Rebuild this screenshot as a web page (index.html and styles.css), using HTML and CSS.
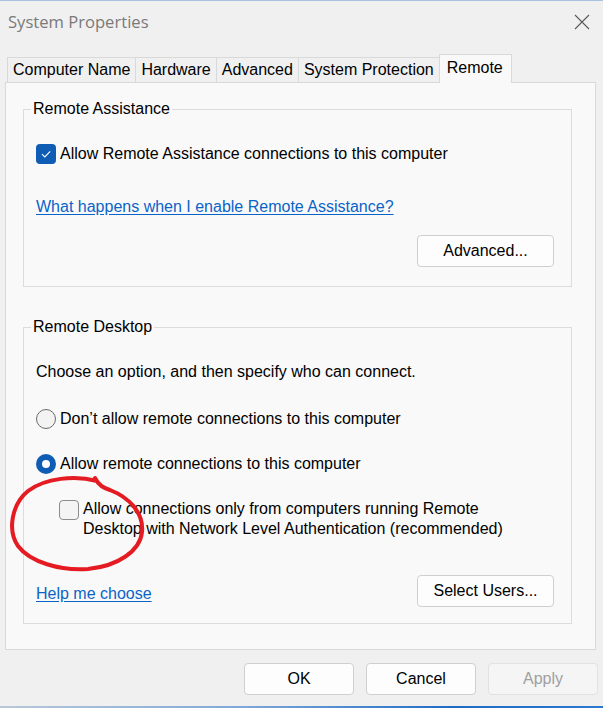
FILE: index.html
```html
<!DOCTYPE html>
<html lang="en">
<head>
<meta charset="utf-8">
<title>System Properties</title>
<link rel="stylesheet" href="styles.css">
</head>
<body>
<div class="window">
  <div class="titlebar">
    <span class="title">System Properties</span>
    <svg class="close" width="16" height="16" viewBox="0 0 16 16"><path d="M1 1 L15 15 M15 1 L1 15" stroke="#5a5a5a" stroke-width="1.1" fill="none"/></svg>
  </div>
  <div class="tabs">
    <div class="tab">Computer Name</div>
    <div class="tab">Hardware</div>
    <div class="tab">Advanced</div>
    <div class="tab">System Protection</div>
    <div class="tab active">Remote</div>
  </div>
  <div class="page">
    <fieldset class="group group-assist">
      <legend>Remote Assistance</legend>
      <div class="row check-row">
        <span class="cb checked"><svg width="20" height="20" viewBox="0 0 20 20"><path d="M6 10.2 L8.8 13 L14.2 7.4" stroke="#fff" stroke-width="1.1" fill="none"/></svg></span>
        <span>Allow Remote Assistance connections to this computer</span>
      </div>
      <a class="link link-assist" href="#">What happens when I enable Remote Assistance?</a>
      <div class="btn-row"><button class="btn btn-wide">Advanced...</button></div>
    </fieldset>
    <fieldset class="group group-desktop">
      <legend>Remote Desktop</legend>
      <p class="intro">Choose an option, and then specify who can connect.</p>
      <div class="row radio-row first"><span class="radio"></span><span>Don’t allow remote connections to this computer</span></div>
      <div class="row radio-row"><span class="radio on"></span><span>Allow remote connections to this computer</span></div>
      <div class="row nla-row"><span class="cb"></span><span>Allow connections only from computers running Remote<br>Desktop with Network Level Authentication (recommended)</span></div>
      <div class="bottom-row"><a class="link link-help" href="#">Help me choose</a><button class="btn btn-wide">Select Users...</button></div>
    </fieldset>
  </div>
  <div class="footer">
    <button class="btn btn-foot">OK</button>
    <button class="btn btn-foot">Cancel</button>
    <button class="btn btn-foot disabled">Apply</button>
  </div>
  <div class="edge"></div>
  <svg class="annotation" width="603" height="708" viewBox="0 0 603 708">
    <path d="M97 481 C 75 475, 45 478, 28 491 C 12 504, 7 530, 18 546 C 30 562, 60 571, 88 569 C 118 566, 140 551, 142 532 C 144 512, 128 497, 110 490 C 104 488, 99 486, 95 478" stroke="#e41b22" stroke-width="4" fill="none" stroke-linecap="round" stroke-linejoin="round"/>
  </svg>
</div>
</body>
</html>
```

FILE: styles.css
```css
* { box-sizing: border-box; }
html, body { margin: 0; padding: 0; }
body {
  width: 603px;
  height: 708px;
  overflow: hidden;
  font-family: "Liberation Sans", Arial, sans-serif;
  font-size: 16px;
  color: #000;
}
.window {
  position: relative;
  width: 603px;
  height: 708px;
  background: #f0f0f0;
  border-top: 1px solid #a8c4e0;
  display: flex;
  flex-direction: column;
}
.titlebar {
  height: 53px;
  display: flex;
  justify-content: space-between;
  align-items: flex-start;
  padding: 9px 13px 0 8px;
}
.title {
  font-family: "Open Sans", "Noto Sans", sans-serif;
  font-size: 16.6px;
  line-height: 24px;
  color: #7a7a7a;
}
.close { margin-top: 4px; }
.tabs {
  height: 28px;
  display: flex;
  align-items: flex-end;
  padding-left: 7px;
}
.tab {
  height: 25px;
  line-height: 24px;
  padding: 0 5px;
  border-top: 1px solid #d9d9d9;
  border-left: 1px solid #d9d9d9;
  background: #f0f0f0;
  white-space: nowrap;
}
.tab.active {
  height: 29px;
  margin-bottom: -1px;
  line-height: 26px;
  padding: 0 8px 0 7px;
  border-right: 1px solid #d9d9d9;
  background: #f9f9f9;
  position: relative;
  z-index: 1;
}
.page {
  margin: 0 7px 0 5px;
  border: 1px solid #d9d9d9;
  background: #f9f9f9;
  padding: 17px 23px 25px 17px;
}
.group {
  margin: 0;
  padding: 0 17px 19px 12px;
  border: 1px solid #dcdcdc;
  min-width: 0;
}
.group legend {
  font-size: 16px;
  line-height: 18px;
  padding: 0 2px;
  margin-left: -5px;
}
.group-desktop {
  margin-top: 31px;
  padding-bottom: 16px;
}
.row {
  display: flex;
  align-items: center;
  gap: 4px;
  line-height: 20px;
}
.check-row { margin-top: 26px; }
.cb {
  width: 20px;
  height: 20px;
  flex: none;
  border: 1px solid #8c8c8c;
  border-radius: 4px;
  background: #f4f4f4;
}
.cb.checked {
  border: none;
  background: #0f5cb4;
}
.cb svg { display: block; }
.link {
  display: block;
  width: fit-content;
  color: #0a64c8;
  text-decoration: underline;
  text-underline-offset: 2px;
  line-height: 20px;
}
.link-assist { margin-top: 33px; }
.btn-row {
  margin-top: 18px;
  display: flex;
  justify-content: flex-end;
}
.btn {
  height: 32px;
  font-family: "Liberation Sans", Arial, sans-serif;
  font-size: 16px;
  color: #000;
  background: #fdfdfd;
  border: 1px solid #cfcfcf;
  border-radius: 4px;
  padding: 0;
}
.btn-wide { width: 137px; }
.intro {
  margin: 26px 0 0;
  line-height: 20px;
}
.radio-row { margin-top: 25px; }
.radio-row.first { margin-top: 27px; }
.radio {
  width: 20px;
  height: 20px;
  flex: none;
  border-radius: 50%;
  border: 1px solid #6a6a6a;
  background: #f3f3f3;
}
.radio.on {
  border: none;
  background: #0f5cb4;
  position: relative;
}
.radio.on::after {
  content: "";
  position: absolute;
  left: 6px;
  top: 6px;
  width: 8px;
  height: 8px;
  border-radius: 50%;
  background: #fff;
}
.nla-row {
  margin-top: 25px;
  margin-left: 23px;
  align-items: flex-start;
}
.nla-row .cb { margin-top: 1px; }
.bottom-row {
  margin-top: 36px;
  display: flex;
  justify-content: space-between;
  align-items: center;
}
.link-help { margin-top: 6px; }
.footer {
  margin-top: 13px;
  display: flex;
  justify-content: flex-end;
  gap: 12px;
  padding-right: 5px;
}
.btn-foot { width: 110px; }
.btn.disabled {
  color: #a0a0a0;
  background: #f5f5f5;
  border-color: #e2e2e2;
}
.edge {
  margin-top: auto;
  height: 2px;
  background: linear-gradient(to right, #b8c8d8, #7fa8d8 40%, #1f6cc6 75%, #2a78cf);
}
.annotation {
  position: absolute;
  left: 0;
  top: -1px;
  pointer-events: none;
}
```
